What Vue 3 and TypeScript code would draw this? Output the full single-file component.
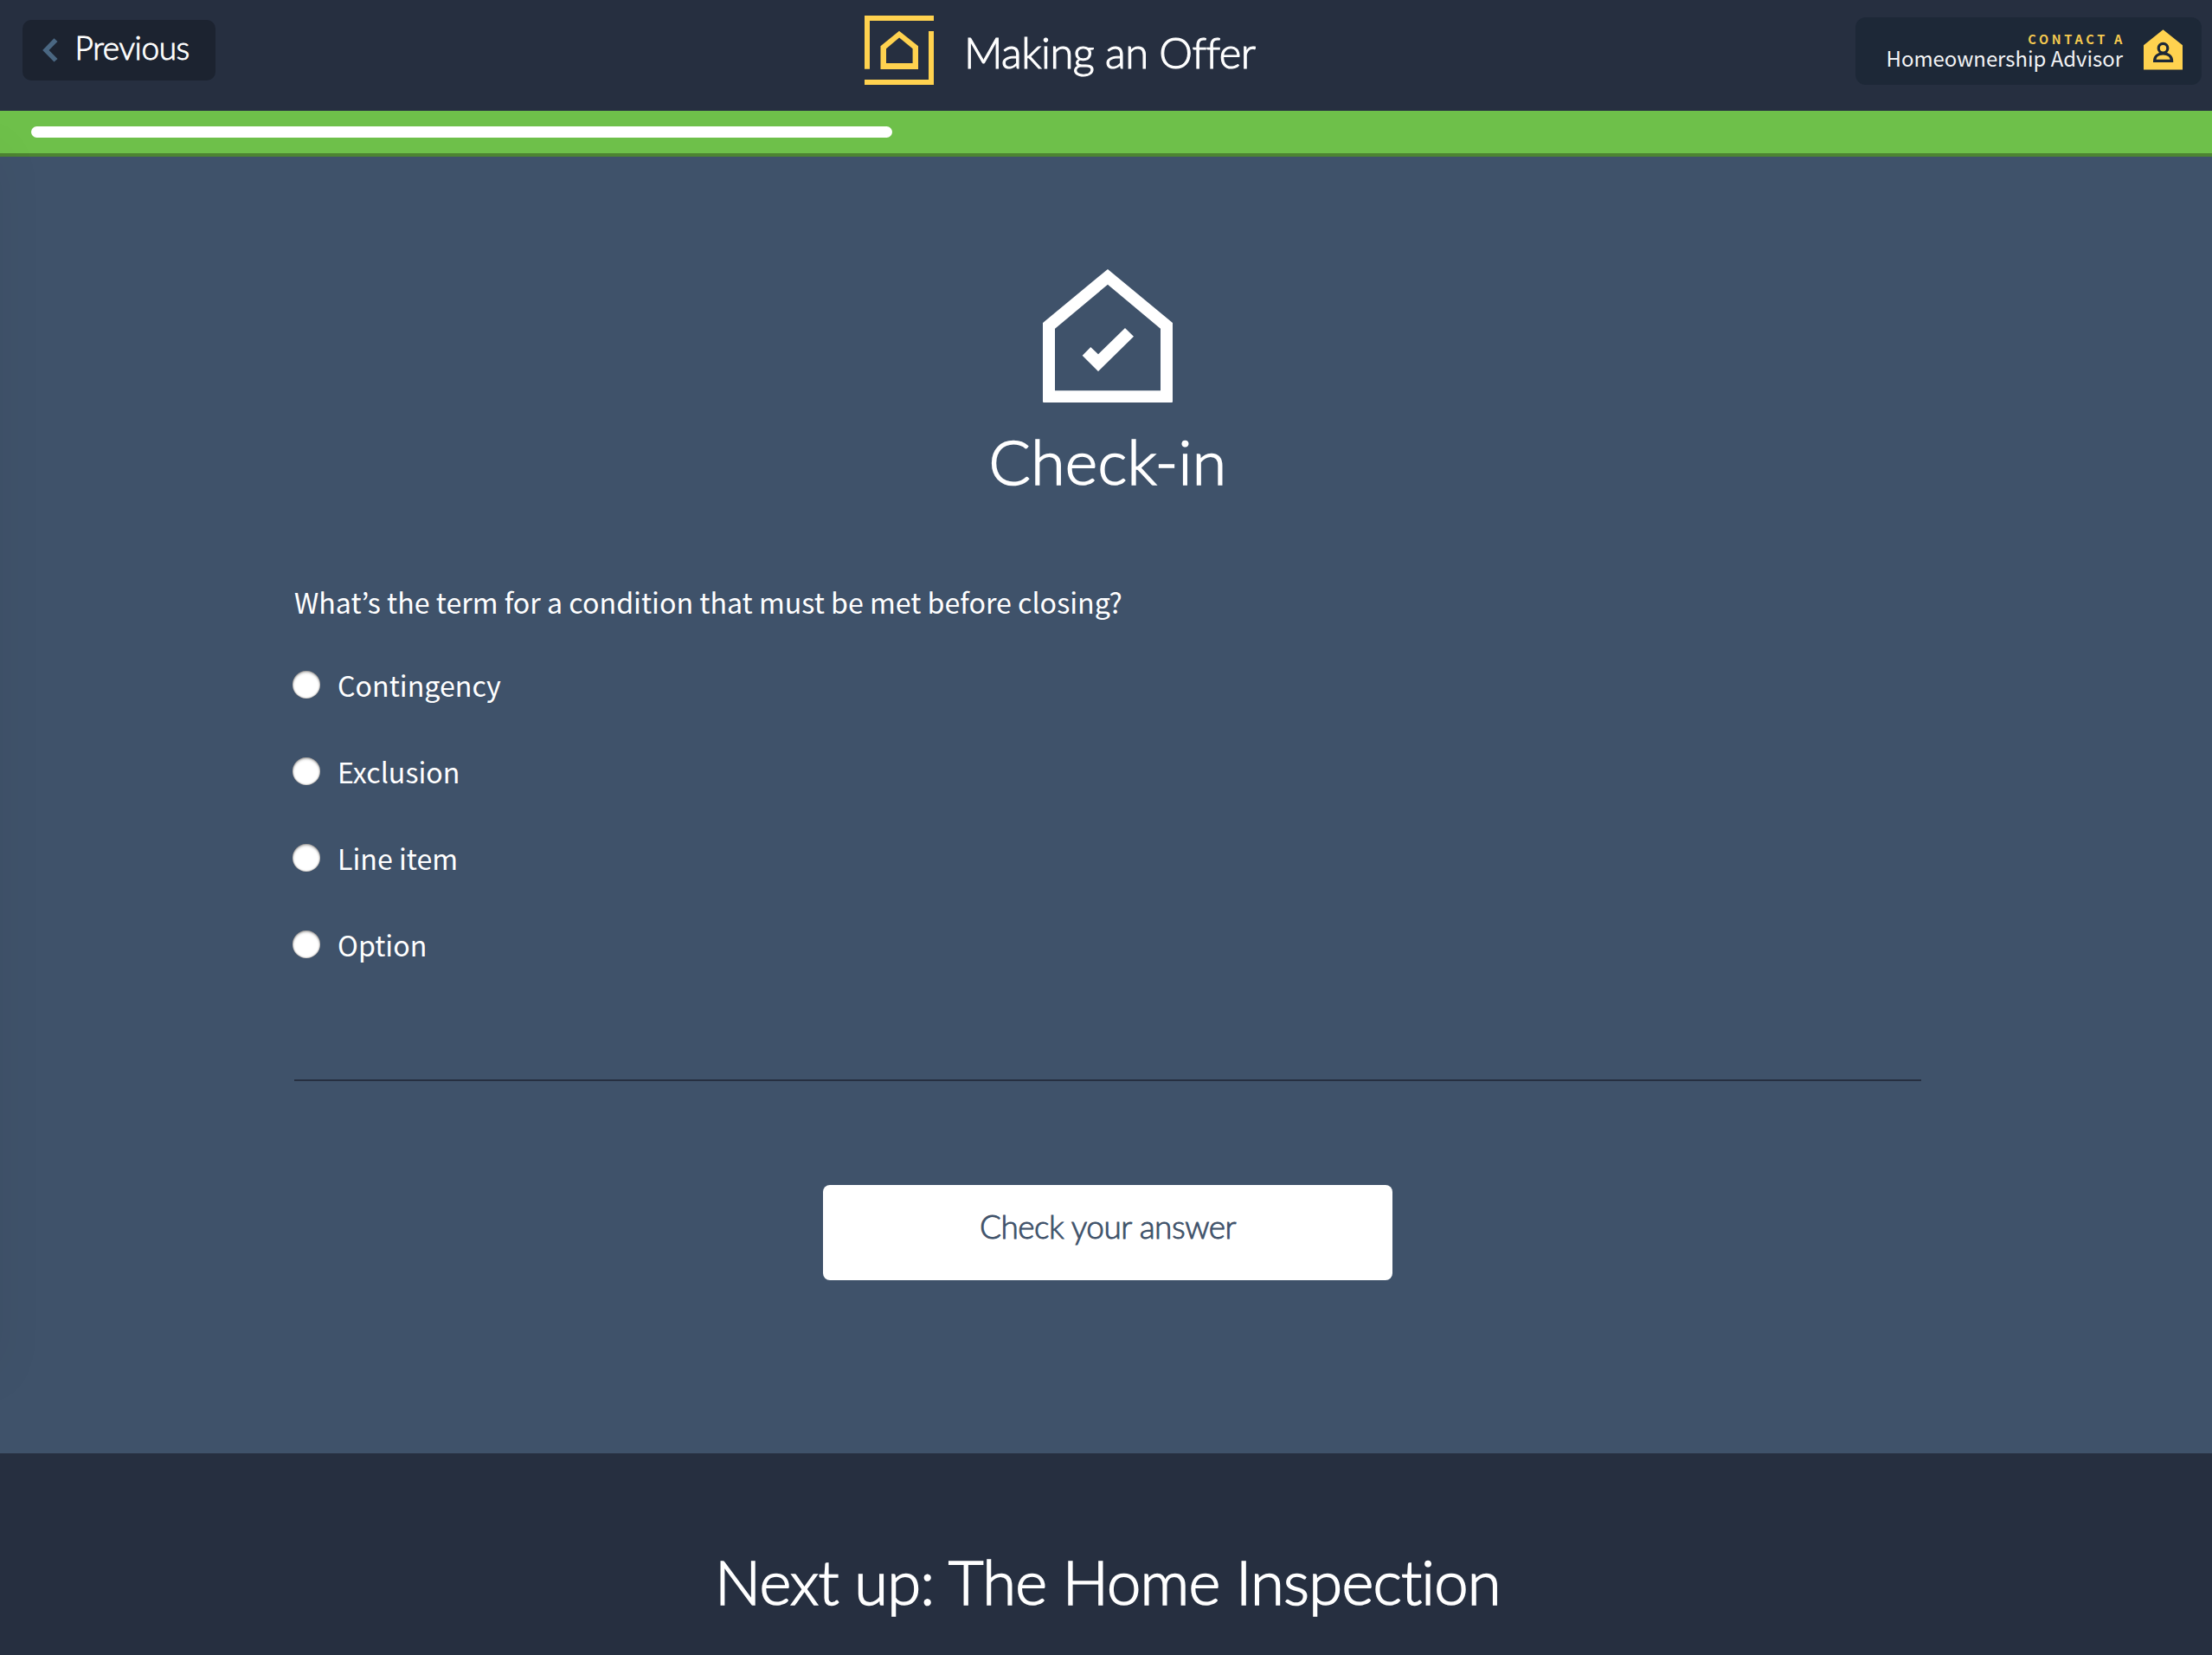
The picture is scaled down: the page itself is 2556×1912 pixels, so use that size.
<script setup lang="ts">
import { ref } from 'vue'

const progress = 40
const options: string[] = ['Contingency', 'Exclusion', 'Line item', 'Option']
const answer = ref<string | null>(null)
</script>

<template>
  <div class="page">
    <header class="topbar">
      <button class="previous" type="button">
        <svg class="chevron" viewBox="0 0 18 28" width="18" height="28" aria-hidden="true">
          <path d="M13.5 0.3 17.5 4 7.6 14 17.5 24 13.5 27.6 0.2 14Z" />
        </svg>
        <span>Previous</span>
      </button>

      <div class="lesson">
        <svg class="logo" viewBox="0 0 80 80" width="80" height="80" aria-hidden="true">
          <path d="M0 0H80V6H6V61.7H0Z" />
          <path d="M74 18H80V80H0V74H74Z" />
          <path
            fill-rule="evenodd"
            d="M40 17.7 62 35.3V62H18.5V35.3ZM40.1 25.4 25 38.2V55H55.6V38.2Z"
          />
        </svg>
        <h1 class="lesson-title">Making an Offer</h1>
      </div>

      <button class="contact" type="button">
        <span class="contact-text">
          <span class="contact-kicker">CONTACT A</span>
          <span class="contact-name">Homeownership Advisor</span>
        </span>
        <svg class="advisor" viewBox="0 0 45 47" width="45" height="47" aria-hidden="true">
          <path class="advisor-house" d="M22.5 0.3 45 18.3V46.6H0V18.3Z" />
          <circle class="advisor-line" cx="22.5" cy="21.7" r="5.3" />
          <path class="advisor-line" d="M12.6 36.3H32.6C32.6 30.6 28 27.8 22.6 27.8S12.6 30.6 12.6 36.3Z" />
        </svg>
      </button>
    </header>

    <div class="progress">
      <div class="track">
        <div class="bar" :style="{ width: progress + '%' }"></div>
      </div>
    </div>

    <main class="checkin">
      <svg class="house" viewBox="0 0 150 154" width="150" height="154" aria-hidden="true">
        <path
          fill-rule="evenodd"
          d="M75 0 150 62V153Q150 154 149 154H1Q0 154 0 153V62ZM75 17.7 14 68.7V140.3H136V68.7Z"
        />
        <path d="M55.3 90 64 98.3 95 68 105 77.7 64 118 45.7 99.7Z" />
      </svg>
      <h2 class="checkin-title">Check-in</h2>

      <form class="quiz" @submit.prevent>
        <p class="question">What’s the term for a condition that must be met before closing?</p>
        <label v-for="option in options" :key="option" class="option">
          <input v-model="answer" class="radio" type="radio" name="answer" :value="option" />
          <span>{{ option }}</span>
        </label>
        <hr class="divider" />
        <button class="check" type="submit">Check your answer</button>
      </form>
    </main>

    <footer class="next">
      <h2 class="next-title">Next up: The Home Inspection</h2>
    </footer>

    <div class="edge-shadow"></div>
  </div>
</template>

<style>
body {
  background: #262f40;
}
</style>

<style scoped>
.page {
  position: relative;
  display: flex;
  flex-direction: column;
  height: 1912px;
  overflow: hidden;
  color: #fff;
  font-family: 'Noto Sans CJK KR', 'Noto Sans', sans-serif;
}

button {
  border: 0;
  margin: 0;
  padding: 0;
  color: inherit;
  font: inherit;
}

h1,
h2,
p {
  margin: 0;
}

.topbar {
  display: flex;
  align-items: flex-start;
  box-sizing: border-box;
  height: 128px;
  flex: none;
  padding: 0 12px 0 26px;
  background: #262f40;
}

.previous {
  display: flex;
  align-items: flex-start;
  box-sizing: border-box;
  width: 223px;
  height: 70px;
  margin-top: 23px;
  padding: 9px 0 0 22.6px;
  border-radius: 10px;
  background: #1c2330;
  font: 300 37px/46px Lato, sans-serif;
  letter-spacing: -0.4px;
  -webkit-text-stroke: 0.9px currentColor;
}

.chevron {
  margin: 11.5px 20px 0 0;
  fill: #4a6782;
}

.lesson {
  display: flex;
  align-items: flex-start;
  margin: 18px 0 0 750px;
}

.logo {
  fill: #ffd24f;
}

.lesson-title {
  margin: 12px 0 0 35px;
  font: 300 49px/60px Lato, sans-serif;
  letter-spacing: -0.55px;
  white-space: nowrap;
  -webkit-text-stroke: 1.1px currentColor;
}

.contact {
  display: flex;
  align-items: flex-start;
  justify-content: flex-end;
  box-sizing: border-box;
  width: 400px;
  height: 78px;
  margin: 20px 0 0 auto;
  padding: 14px 22px 0 0;
  border-radius: 12px;
  background: #1d2837;
}

.contact-text {
  display: flex;
  flex-direction: column;
  align-items: flex-end;
  margin: 3px 24px 0 0;
}

.contact-kicker {
  margin-right: -3px;
  color: #f5ca50;
  font-size: 14.5px;
  font-weight: 700;
  line-height: 16px;
  letter-spacing: 3.7px;
}

.contact-name {
  color: #f2f3f5;
  font-size: 23.9px;
  line-height: 28px;
}

.advisor-house {
  fill: #ffd24f;
}

.advisor-line {
  fill: none;
  stroke: #1d2837;
  stroke-width: 3.2;
}

.progress {
  flex: none;
  height: 49px;
  border-bottom: 4px solid #4d8432;
  background: #6ec04a;
}

.track {
  padding-top: 18px;
  margin: 0 33px 0 36px;
}

.bar {
  height: 13px;
  border-radius: 6.5px;
  background: #fff;
}

.checkin {
  display: flex;
  flex-direction: column;
  align-items: center;
  box-sizing: border-box;
  height: 1498px;
  flex: none;
  padding: 130px 0 0 4px;
  background: #3f526a;
}

.house {
  flex: none;
  fill: #fff;
}

.checkin-title {
  margin-top: 24px;
  font: 300 71.5px/86px Lato, sans-serif;
  letter-spacing: 0.3px;
  -webkit-text-stroke: 1.6px currentColor;
}

.quiz {
  display: flex;
  flex-direction: column;
  width: 1880px;
  margin-top: 90px;
}

.question {
  margin-bottom: 16px;
  font-size: 32.2px;
  line-height: 60px;
}

.option {
  display: flex;
  align-items: center;
  gap: 20px;
  height: 100px;
  margin-left: -2px;
  font-size: 32.2px;
  line-height: 60px;
}

.radio {
  appearance: none;
  width: 32px;
  height: 32px;
  margin: 0;
  border-radius: 50%;
  background: #fff;
  box-shadow:
    inset 0 0 2px rgba(60, 50, 40, 0.75),
    inset 0 2px 3px rgba(0, 0, 0, 0.25);
}

.radio:checked {
  border: 9px solid #fff;
  background: #262f40;
}

.divider {
  width: 100%;
  height: 2px;
  margin: 106px 0 0;
  border: 0;
  background: #262f40;
}

.check {
  align-self: center;
  box-sizing: border-box;
  width: 658px;
  height: 110px;
  margin-top: 120px;
  padding: 0 0 14px;
  border-radius: 8px;
  background: #fff;
  color: #3f526a;
  font: 300 37px/46px Lato, sans-serif;
  letter-spacing: -0.5px;
  -webkit-text-stroke: 0.9px currentColor;
}

.next {
  flex: 1;
  padding: 105px 0 0 4px;
  background: #262f40;
  text-align: center;
}

.next-title {
  font: 300 70.5px/86px Lato, sans-serif;
  letter-spacing: -0.75px;
  -webkit-text-stroke: 1.6px currentColor;
}

.edge-shadow {
  position: absolute;
  top: 170px;
  left: -40px;
  width: 40px;
  height: 1420px;
  box-shadow: 0 0 60px rgba(0, 0, 0, 0.05);
  pointer-events: none;
}
</style>
